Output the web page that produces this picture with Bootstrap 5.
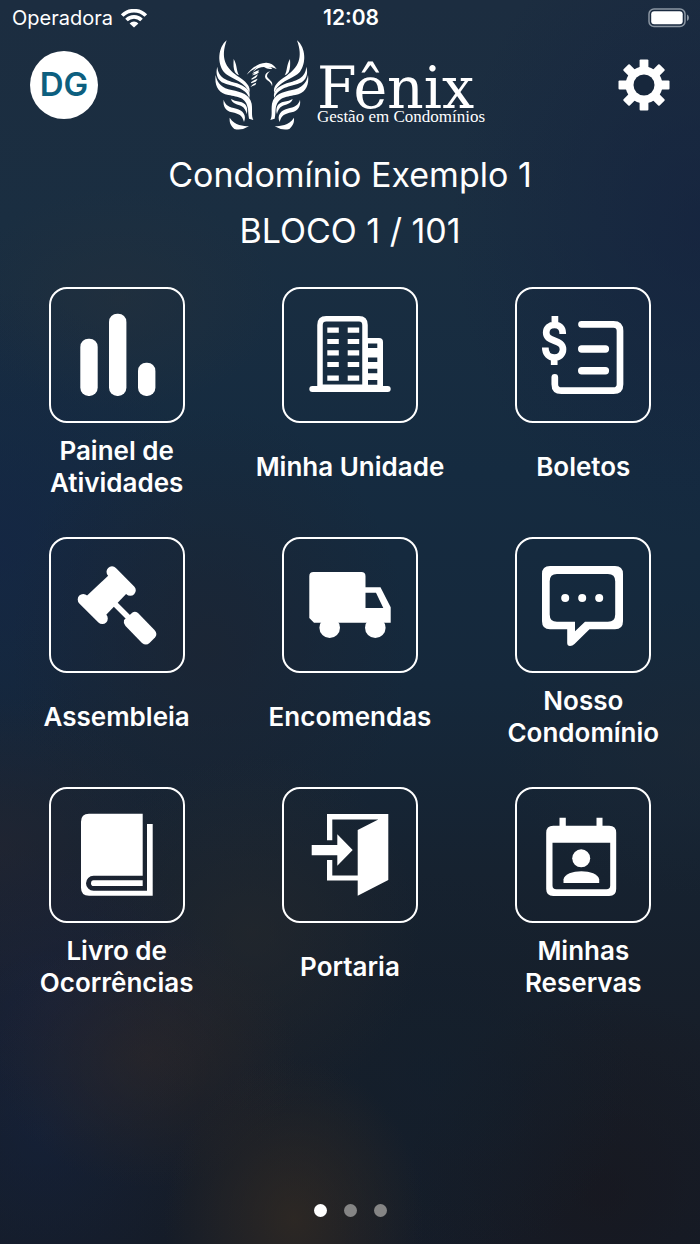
<!DOCTYPE html>
<html lang="pt-BR">
<head>
<meta charset="utf-8">
<meta name="viewport" content="width=device-width, initial-scale=1">
<title>Fênix - Gestão em Condomínios</title>
<link rel="stylesheet" href="https://cdn.jsdelivr.net/npm/bootstrap@5.3.0/dist/css/bootstrap.min.css">
<style>
  body {
    font-family: Inter, "Liberation Sans", sans-serif;
    color: #fff;
    background:
      radial-gradient(ellipse 130px 160px at 42% 98%, rgba(54,44,34,.7), transparent),
      radial-gradient(ellipse 150px 130px at 21% 85%, rgba(46,40,40,.6), transparent),
      radial-gradient(ellipse 160px 180px at 6% 91%, rgba(20,34,62,.6), transparent),
      radial-gradient(ellipse 180px 150px at 8% 80%, rgba(30,36,62,.55), transparent),
      radial-gradient(ellipse 170px 180px at 36% 75%, rgba(42,43,44,.5), transparent),
      radial-gradient(ellipse 180px 150px at 0% 68%, rgba(40,38,50,.5), transparent),
      radial-gradient(ellipse 200px 240px at 30% 52%, rgba(30,35,48,.6), transparent),
      radial-gradient(ellipse 200px 260px at 0% 44%, rgba(20,37,70,.6), transparent),
      radial-gradient(ellipse 160px 110px at 17% 24%, rgba(36,48,60,.6), transparent),
      radial-gradient(ellipse 250px 320px at 100% 18%, rgba(20,32,62,.6), transparent),
      radial-gradient(ellipse 200px 150px at 100% 60%, rgba(28,40,54,.6), transparent),
      radial-gradient(ellipse 200px 200px at 62% 86%, rgba(18,32,46,.6), transparent),
      radial-gradient(ellipse 200px 200px at 86% 96%, rgba(24,22,28,.6), transparent),
      linear-gradient(#1c2d40 0%, #1a2e41 18%, #152b40 38%, #15283b 55%, #162230 70%, #171e29 84%, #151c28 100%);
  }
  .status-bar { height: 36px; padding: 0 10px 0 12px; font-size: 20px; }
  .status-time { font-size: 21px; }
  .app-header { height: 98px; padding: 0 30px; }
  .avatar { width: 68px; height: 68px; background: #fff; color: #0d5f7f; font-size: 33px; font-weight: 600; }
  .wordmark { padding-top: 24px; }
  .wordmark-name { font-family: "DejaVu Serif", serif; font-size: 57px; line-height: 40px; }
  .wordmark-tagline { font-family: "Liberation Serif", serif; font-size: 17px; line-height: 18px; }
  .unit-info { font-size: 34px; line-height: 56px; padding: 13px 0 28px; }
  .menu-grid { row-gap: 38px; }
  .menu-item { color: #fff; gap: 12px; }
  .menu-tile { width: 136px; height: 136px; border: 2px solid #fff; border-radius: 18px; }
  .menu-label { width: 204px; height: 64px; font-size: 26px; font-weight: 600; line-height: 32px; }
  .pager { gap: 17px; padding: 24px 0 27px; }
  .pager-dot { width: 13px; height: 13px; background: #858585; }
  .pager-dot.active { background: #fff; }
</style>
</head>
<body>
<div class="d-flex flex-column min-vh-100">

  <div class="status-bar d-flex align-items-center">
    <div class="col d-flex align-items-center gap-2">
      <span>Operadora</span>
      <svg width="26" height="19" viewBox="0 0 26 19" fill="none" stroke="#fff" stroke-width="3.600" aria-hidden="true">
        <path d="M1.200 6.600A16.500 16.500 0 0 1 24.800 6.600"/>
        <path d="M5.500 11A10.600 10.600 0 0 1 20.500 11"/>
        <path d="M13 18.500L8.600 14.400A6.300 6.300 0 0 1 17.400 14.400Z" fill="#fff" stroke="none"/>
      </svg>
    </div>
    <div class="status-time fw-semibold">12:08</div>
    <div class="col d-flex justify-content-end">
      <svg width="42" height="20" viewBox="0 0 42 20" aria-hidden="true">
        <rect x="1" y="1" width="36" height="17.500" rx="5" fill="none" stroke="#8c97a3" stroke-width="1.500"/>
        <rect x="3.200" y="3.200" width="31.500" height="13" rx="3" fill="#fff"/>
        <path d="M39 6.500q2 1 2 3.300t-2 3.300z" fill="#8c97a3"/>
      </svg>
    </div>
  </div>

  <header class="app-header d-flex align-items-center justify-content-between">
    <div class="col d-flex">
      <button class="avatar btn rounded-circle border-0 p-0" type="button">DG</button>
    </div>
    <div class="d-flex align-items-center">
      <svg width="94" height="92" viewBox="34 24 282 276" fill="#fff" class="me-2" aria-hidden="true">
        <defs>
          <g id="wing">
            <path d="M69 28C42 50 41 98 60 122C78 143 122 148 137 185C143 166 126 150 100 134C65 110 50 80 69 28Z"/>
            <path d="M90 84C89 100 89 114 94 124Q99 131 106 133C97 118 101 102 90 84Z"/>
            <path d="M41 107C35 128 40 148 62 157C90 168 124 168 137 201C143 178 124 166 100 157C68 147 44 142 41 107Z"/>
            <path d="M36 132C32 163 43 186 74 192C104 198 128 199 133 234Q134 253 136 263L149 267C142 254 147 236 144 218C138 190 113 183 84 177C56 172 40 158 36 132Z"/>
            <path d="M82 204C86 220 103 219 114 226Q126 233 129 250C135 229 126 215 108 212Q92 210 82 204Z"/>
            <path d="M60 206C57 226 66 240 85 244C105 248 116 253 121 273C130 252 117 238 98 233C76 228 65 223 60 206Z"/>
            <path d="M78 260C77 275 81 284 92 294Q113 300 136 286C119 284 94 285 78 260Z"/>
          </g>
        </defs>
        <use href="#wing"/>
        <use href="#wing" transform="matrix(-1 0 0 1 349 0)"/>
        <path d="M129 131C143 112 163 96 187 95Q205 94 219 114Q204 107 194 108Q203 109 206 113Q193 116 181 108Q162 108 147 124Q153 113 161 109Q145 115 129 131Z"/>
        <path d="M145 128Q154 121 167 117Q162 122 166 124Q158 132 144 133Q151 130 153 127ZM143 143Q150 138 163 130L159 137Q157 142 144 146ZM142 154Q149 148 162 143L158 150Q155 154 143 157ZM140 168Q148 158 158 155L155 162Q150 163 140 168Z"/>
        <path d="M200 121Q184 125 184 137C186 150 203 149 205 166C211 150 191 145 190 136Q190 127 200 121Z"/>
      </svg>
      <div class="wordmark text-nowrap">
        <div class="wordmark-name">Fênix</div>
        <div class="wordmark-tagline">Gestão em Condomínios</div>
      </div>
    </div>
    <div class="col d-flex justify-content-end">
      <button class="btn border-0 p-0" type="button" aria-label="Configurações">
        <svg class="d-block" width="52" height="52" viewBox="-26 -26 52 52" fill="#fff" aria-hidden="true">
          <g id="teeth">
            <rect x="-4.400" y="-25.500" width="8.800" height="51" rx="1"/>
            <rect x="-25.500" y="-4.400" width="51" height="8.800" rx="1"/>
          </g>
          <use href="#teeth" transform="rotate(45)"/>
          <circle r="18.500"/>
          <circle r="10.500" fill="#17273c"/>
        </svg>
      </button>
    </div>
  </header>

  <section class="unit-info text-center">
    <div>Condomínio Exemplo 1</div>
    <div>BLOCO 1 / 101</div>
  </section>

  <main class="menu-grid row g-0">
    <div class="col-4 d-flex justify-content-center">
      <button class="menu-item btn border-0 p-0 d-flex flex-column align-items-center" type="button">
        <span class="menu-tile d-block">
          <svg class="d-block w-100 h-100" viewBox="2 2 132 132" fill="#fff" aria-hidden="true">
            <rect x="31.300" y="51.700" width="17.400" height="57.300" rx="8.200"/>
            <rect x="60" y="26.700" width="17.400" height="82.300" rx="8.200"/>
            <rect x="89" y="75.700" width="17.400" height="33.300" rx="8.200"/>
          </svg>
        </span>
        <span class="menu-label d-flex align-items-center justify-content-center">Painel de Atividades</span>
      </button>
    </div>
    <div class="col-4 d-flex justify-content-center">
      <button class="menu-item btn border-0 p-0 d-flex flex-column align-items-center" type="button">
        <span class="menu-tile d-block">
          <svg class="d-block w-100 h-100" viewBox="2 2 132 132" fill="#fff" aria-hidden="true">
            <path d="M38 101V38Q38 31.800 44.200 31.800H77Q83 31.800 83 38V101" fill="none" stroke="#fff" stroke-width="5.500"/>
            <path d="M45.300 40.500h11.500v5.200H45.300zM65.700 40.500h11.500v5.200H65.700zM45.300 51.900h11.500v5.200H45.300zM65.700 51.900h11.500v5.200H65.700zM45.300 63.300h11.500v5.200H45.300zM65.700 63.300h11.500v5.200H65.700zM45.300 74.900h11.500v5.200H45.300zM65.700 74.900h11.500v5.200H65.700zM45.300 88.500h11.500v5.200H45.300zM65.700 88.500h11.500v5.200H65.700z"/>
            <path fill-rule="evenodd" d="M84 51H97Q101 51 101 55V101H84ZM86 56.500V61H95.300V56.500ZM86 70.500V75H95.300V70.500ZM86 81.700V86.300H95.300V81.700ZM86 93V97.700H95.300V93Z"/>
            <rect x="38" y="97.500" width="46" height="4"/>
            <rect x="27.300" y="99" width="81.400" height="6" rx="3"/>
          </svg>
        </span>
        <span class="menu-label d-flex align-items-center justify-content-center">Minha Unidade</span>
      </button>
    </div>
    <div class="col-4 d-flex justify-content-center">
      <button class="menu-item btn border-0 p-0 d-flex flex-column align-items-center" type="button">
        <span class="menu-tile d-block">
          <svg class="d-block w-100 h-100" viewBox="2 2 132 132" fill="none" stroke="#fff" stroke-width="6.700" aria-hidden="true">
            <path d="M66.500 37.300H98.500Q105 37.300 105 43.800V97.200Q105 103.700 98.500 103.700H46.300Q39.800 103.700 39.800 97.200V90.300" stroke-linecap="round"/>
            <path d="M66.700 62H90.400M66.700 83.700H90.400" stroke-width="7.400" stroke-linecap="round"/>
            <path d="M47.700 47V46C47.700 41 44 37.800 39.500 37.800S31.200 41 31.200 45.500C31.200 56 48 51.500 48 62.300C48 67.500 44 70.600 39.200 70.600S30.300 67 30.300 60.500M39.900 29V38M39.200 70V78"/>
          </svg>
        </span>
        <span class="menu-label d-flex align-items-center justify-content-center">Boletos</span>
      </button>
    </div>

    <div class="col-4 d-flex justify-content-center">
      <button class="menu-item btn border-0 p-0 d-flex flex-column align-items-center" type="button">
        <span class="menu-tile d-block">
          <svg class="d-block w-100 h-100" viewBox="2 2 132 132" fill="#fff" aria-hidden="true">
            <path d="M63 34.800L81.300 53.300M34.200 62.500L53.300 81.500" stroke="#fff" stroke-width="11" stroke-linecap="round"/>
            <path d="M61 37L79 55L56 79L37 59.500Z"/>
            <path d="M62 63L82 83" stroke="#fff" stroke-width="5.500"/>
            <path d="M83.500 75.500Q86 74 89 76L105.500 93Q109 97 106 100.500L100.500 106Q97 109 93 106L76.500 89Q74 86 75 83Z"/>
          </svg>
        </span>
        <span class="menu-label d-flex align-items-center justify-content-center">Assembleia</span>
      </button>
    </div>
    <div class="col-4 d-flex justify-content-center">
      <button class="menu-item btn border-0 p-0 d-flex flex-column align-items-center" type="button">
        <span class="menu-tile d-block">
          <svg class="d-block w-100 h-100" viewBox="2 2 132 132" fill="#fff" aria-hidden="true">
            <path fill-rule="evenodd" d="M31.500 35H79.300Q83.500 35 83.500 39.200V50.300H98.500L108.700 70.300V85.700H32L27.300 81V39.200Q27.300 35 31.500 35ZM83.500 55.700V71H101.300L94 55.700Z"/>
            <circle cx="47.700" cy="90.700" r="10.300"/>
            <circle cx="93.300" cy="90.700" r="10.300"/>
          </svg>
        </span>
        <span class="menu-label d-flex align-items-center justify-content-center">Encomendas</span>
      </button>
    </div>
    <div class="col-4 d-flex justify-content-center">
      <button class="menu-item btn border-0 p-0 d-flex flex-column align-items-center" type="button">
        <span class="menu-tile d-block">
          <svg class="d-block w-100 h-100" viewBox="2 2 132 132" fill="#fff" aria-hidden="true">
            <path fill-rule="evenodd" d="M35 29H100Q108 29 108 37V84.300Q108 92.300 100 92.300H74.500L59.500 107Q57.500 109 55 109Q52.200 109 52.200 106V92.300H35Q27 92.300 27 84.300V37Q27 29 35 29ZM42 37Q34.700 37 34.700 44.300V77.400Q34.700 84.700 42 84.700H60V94.300L70 84.700H92.900Q100.200 84.700 100.200 77.400V44.300Q100.200 37 92.900 37Z"/>
            <circle cx="50.200" cy="61" r="4"/>
            <circle cx="67.200" cy="61" r="4"/>
            <circle cx="84.200" cy="61" r="4"/>
          </svg>
        </span>
        <span class="menu-label d-flex align-items-center justify-content-center">Nosso Condomínio</span>
      </button>
    </div>

    <div class="col-4 d-flex justify-content-center">
      <button class="menu-item btn border-0 p-0 d-flex flex-column align-items-center" type="button">
        <span class="menu-tile d-block">
          <svg class="d-block w-100 h-100" viewBox="2 2 132 132" fill="#fff" aria-hidden="true">
            <path d="M40 26.700H93.700V88.700H44.500A7.500 7.500 0 0 0 44.500 103.700H98V37H103.700V108.700H40Q32 108.700 32 100.700V34.700Q32 26.700 40 26.700Z"/>
            <path d="M44.500 93.300H93.700V99H44.500Q42 99 42 96.200T44.500 93.300Z"/>
          </svg>
        </span>
        <span class="menu-label d-flex align-items-center justify-content-center">Livro de Ocorrências</span>
      </button>
    </div>
    <div class="col-4 d-flex justify-content-center">
      <button class="menu-item btn border-0 p-0 d-flex flex-column align-items-center" type="button">
        <span class="menu-tile d-block">
          <svg class="d-block w-100 h-100" viewBox="2 2 132 132" fill="#fff" aria-hidden="true">
            <path d="M45 53.300V27H106.300V93L75.700 108.700V93.500H45V73H50.300V88.500H75.700V43L96.300 32.500H50.300V53.300Z"/>
            <path d="M29.700 58H55.300V47.300L70.700 63L55.300 78.700V68.300H29.700Z"/>
          </svg>
        </span>
        <span class="menu-label d-flex align-items-center justify-content-center">Portaria</span>
      </button>
    </div>
    <div class="col-4 d-flex justify-content-center">
      <button class="menu-item btn border-0 p-0 d-flex flex-column align-items-center" type="button">
        <span class="menu-tile d-block">
          <svg class="d-block w-100 h-100" viewBox="2 2 132 132" fill="#fff" aria-hidden="true">
            <path fill-rule="evenodd" d="M44.500 30.700H50.800V38.700H81.500V30.700H87.500V38.700H94.200Q101.200 38.700 101.200 45.700V102Q101.200 109 94.200 109H38.200Q31.200 109 31.200 102V45.700Q31.200 38.700 38.200 38.700H44.500ZM37.500 55.700V98.500Q37.500 102.300 41.300 102.300H91.400Q95.200 102.300 95.200 98.500V55.700Z"/>
            <circle cx="66.200" cy="71.300" r="9"/>
            <path d="M48.500 96V92.500C50 81.500 82.700 81.500 84.200 92.500V96Z"/>
          </svg>
        </span>
        <span class="menu-label d-flex align-items-center justify-content-center">Minhas Reservas</span>
      </button>
    </div>
  </main>

  <nav class="pager d-flex justify-content-center mt-auto" aria-label="Páginas">
    <button class="pager-dot active btn border-0 p-0 rounded-circle" type="button" aria-label="Página 1"></button>
    <button class="pager-dot btn border-0 p-0 rounded-circle" type="button" aria-label="Página 2"></button>
    <button class="pager-dot btn border-0 p-0 rounded-circle" type="button" aria-label="Página 3"></button>
  </nav>

</div>
<script src="https://cdn.jsdelivr.net/npm/bootstrap@5.3.0/dist/js/bootstrap.bundle.min.js"></script>
</body>
</html>
